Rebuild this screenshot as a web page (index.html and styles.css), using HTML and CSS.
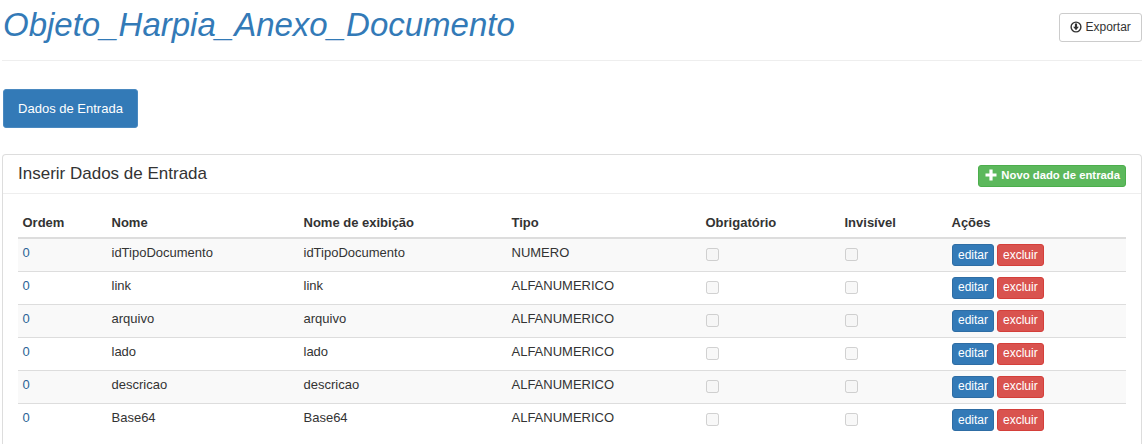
FILE: index.html
```html
<!DOCTYPE html>
<html lang="pt">
<head>
<meta charset="utf-8">
<title>Objeto_Harpia_Anexo_Documento</title>
<link rel="stylesheet" href="styles.css">
</head>
<body>
<div class="page">
  <header class="page-header">
    <h1 class="title">Objeto_Harpia_Anexo_Documento</h1>
    <button class="btn btn-default btn-export" type="button">
      <svg class="icon-export" viewBox="0 0 12 12" aria-hidden="true"><circle cx="6" cy="6" r="4.9" fill="none" stroke="#333" stroke-width="1.4"/><path d="M4.9 2.6h2.2v3.2h1.8L6 9.2 3.1 5.8h1.8z" fill="#333"/></svg>
      Exportar
    </button>
  </header>
  <div class="tabs"><button class="btn btn-tab" type="button">Dados de Entrada</button></div>
  <section class="panel">
    <div class="panel-heading">
      <h3 class="panel-title">Inserir Dados de Entrada</h3>
      <button class="btn btn-new" type="button">
        <svg class="icon-plus" viewBox="0 0 12 12" aria-hidden="true"><path d="M4.4 0.5h3.2v3.9h3.9v3.2H7.6v3.9H4.4V7.6H0.5V4.4h3.9z" fill="#fff"/></svg>
        Novo dado de entrada
      </button>
    </div>
    <div class="panel-body">
      <table class="table">
        <colgroup>
          <col class="c1"><col class="c2"><col class="c3"><col class="c4"><col class="c5"><col class="c6"><col class="c7">
        </colgroup>
        <thead>
          <tr><th>Ordem</th><th>Nome</th><th>Nome de exibição</th><th>Tipo</th><th>Obrigatório</th><th>Invisível</th><th>Ações</th></tr>
        </thead>
        <tbody>
          <tr><td class="ord">0</td><td>idTipoDocumento</td><td>idTipoDocumento</td><td>NUMERO</td><td><input class="chk" type="checkbox" disabled></td><td><input class="chk" type="checkbox" disabled></td><td class="acts"><button class="btn btn-xs btn-edit" type="button">editar</button><button class="btn btn-xs btn-del" type="button">excluir</button></td></tr>
          <tr><td class="ord">0</td><td>link</td><td>link</td><td>ALFANUMERICO</td><td><input class="chk" type="checkbox" disabled></td><td><input class="chk" type="checkbox" disabled></td><td class="acts"><button class="btn btn-xs btn-edit" type="button">editar</button><button class="btn btn-xs btn-del" type="button">excluir</button></td></tr>
          <tr><td class="ord">0</td><td>arquivo</td><td>arquivo</td><td>ALFANUMERICO</td><td><input class="chk" type="checkbox" disabled></td><td><input class="chk" type="checkbox" disabled></td><td class="acts"><button class="btn btn-xs btn-edit" type="button">editar</button><button class="btn btn-xs btn-del" type="button">excluir</button></td></tr>
          <tr><td class="ord">0</td><td>lado</td><td>lado</td><td>ALFANUMERICO</td><td><input class="chk" type="checkbox" disabled></td><td><input class="chk" type="checkbox" disabled></td><td class="acts"><button class="btn btn-xs btn-edit" type="button">editar</button><button class="btn btn-xs btn-del" type="button">excluir</button></td></tr>
          <tr><td class="ord">0</td><td>descricao</td><td>descricao</td><td>ALFANUMERICO</td><td><input class="chk" type="checkbox" disabled></td><td><input class="chk" type="checkbox" disabled></td><td class="acts"><button class="btn btn-xs btn-edit" type="button">editar</button><button class="btn btn-xs btn-del" type="button">excluir</button></td></tr>
          <tr><td class="ord">0</td><td>Base64</td><td>Base64</td><td>ALFANUMERICO</td><td><input class="chk" type="checkbox" disabled></td><td><input class="chk" type="checkbox" disabled></td><td class="acts"><button class="btn btn-xs btn-edit" type="button">editar</button><button class="btn btn-xs btn-del" type="button">excluir</button></td></tr>
        </tbody>
      </table>
    </div>
  </section>
</div>
</body>
</html>
```

FILE: styles.css
```css
* { box-sizing: border-box; }
html, body { margin: 0; padding: 0; background: #fff; }
body {
  font-family: "Liberation Sans", Arial, sans-serif;
  font-size: 13px;
  line-height: 1.42857;
  color: #333;
}
.page { padding: 0 1px 0 2px; }
.page-header {
  display: flex;
  justify-content: space-between;
  align-items: flex-start;
  height: 61px;
  border-bottom: 1px solid #eee;
  padding-top: 13px;
}
.title {
  margin: -8px 0 0 1px;
  font-size: 33px;
  font-weight: 400;
  font-style: italic;
  line-height: 40px;
  color: #337ab7;
}
.btn {
  display: inline-block;
  font-family: inherit;
  font-size: 12px;
  line-height: 1.42857;
  border: 1px solid transparent;
  border-radius: 3px;
  cursor: pointer;
  white-space: nowrap;
}
.btn-export {
  width: 83px;
  height: 29px;
  padding: 0;
  background: #fff;
  border-color: #ccc;
  color: #333;
}
.icon-export { width: 12px; height: 12px; vertical-align: -2px; }
.tabs { padding: 28px 0 0 1px; height: 93px; }
.btn-tab {
  width: 135px;
  height: 39px;
  padding: 2px 0 0;
  background: #337ab7;
  border-color: #4a89c0;
  color: #fff;
  font-size: 13px;
}
.panel {
  border: 1px solid #ddd;
  border-bottom: 0;
  border-radius: 4px 4px 0 0;
  background: #fff;
}
.panel-heading {
  display: flex;
  justify-content: space-between;
  align-items: center;
  height: 39px;
  padding: 0 15px;
  border-bottom: 1px solid #eee;
}
.panel-title { margin: 0; font-size: 17px; font-weight: 400; color: #333; }
.btn-new {
  height: 22px;
  margin-top: 3px;
  padding: 0 5px 0 6px;
  background: #5cb85c;
  border-color: #4cae4c;
  color: #fff;
  font-size: 11.3px;
  font-weight: 700;
}
.icon-plus { width: 12px; height: 12px; vertical-align: -2px; margin-right: 1px; }
.panel-body { padding: 12px 15px 8px; }
.table { width: 100%; border-collapse: collapse; table-layout: fixed; }
.c1 { width: 89px; }
.c2 { width: 192px; }
.c3 { width: 208px; }
.c4 { width: 194px; }
.c5 { width: 139px; }
.c6 { width: 107px; }
.table th {
  height: 32px;
  padding: 8px 5px 4px 4.5px;
  text-align: left;
  font-weight: 700;
  font-size: 13px;
  border-bottom: 2px solid #ddd;
}
.table td {
  height: 33px;
  padding: 0 5px 3px 4.5px;
  font-size: 13px;
  vertical-align: middle;
  border-top: 1px solid #ddd;
}
.table tbody tr:nth-child(odd) { background: #f9f9f9; }
.ord { color: #2a6496; }
.chk { width: 13px; height: 13px; margin: 2px 0 0 0; vertical-align: middle; }
.table td.acts { padding: 0 5px; }
.btn-xs { height: 22px; padding: 1px 5px 0; font-size: 12px; }
.btn-edit { background: #337ab7; border-color: #2e6da4; color: #fff; margin-right: 3px; }
.btn-del { background: #d9534f; border-color: #d43f3a; color: #fff; }
```
